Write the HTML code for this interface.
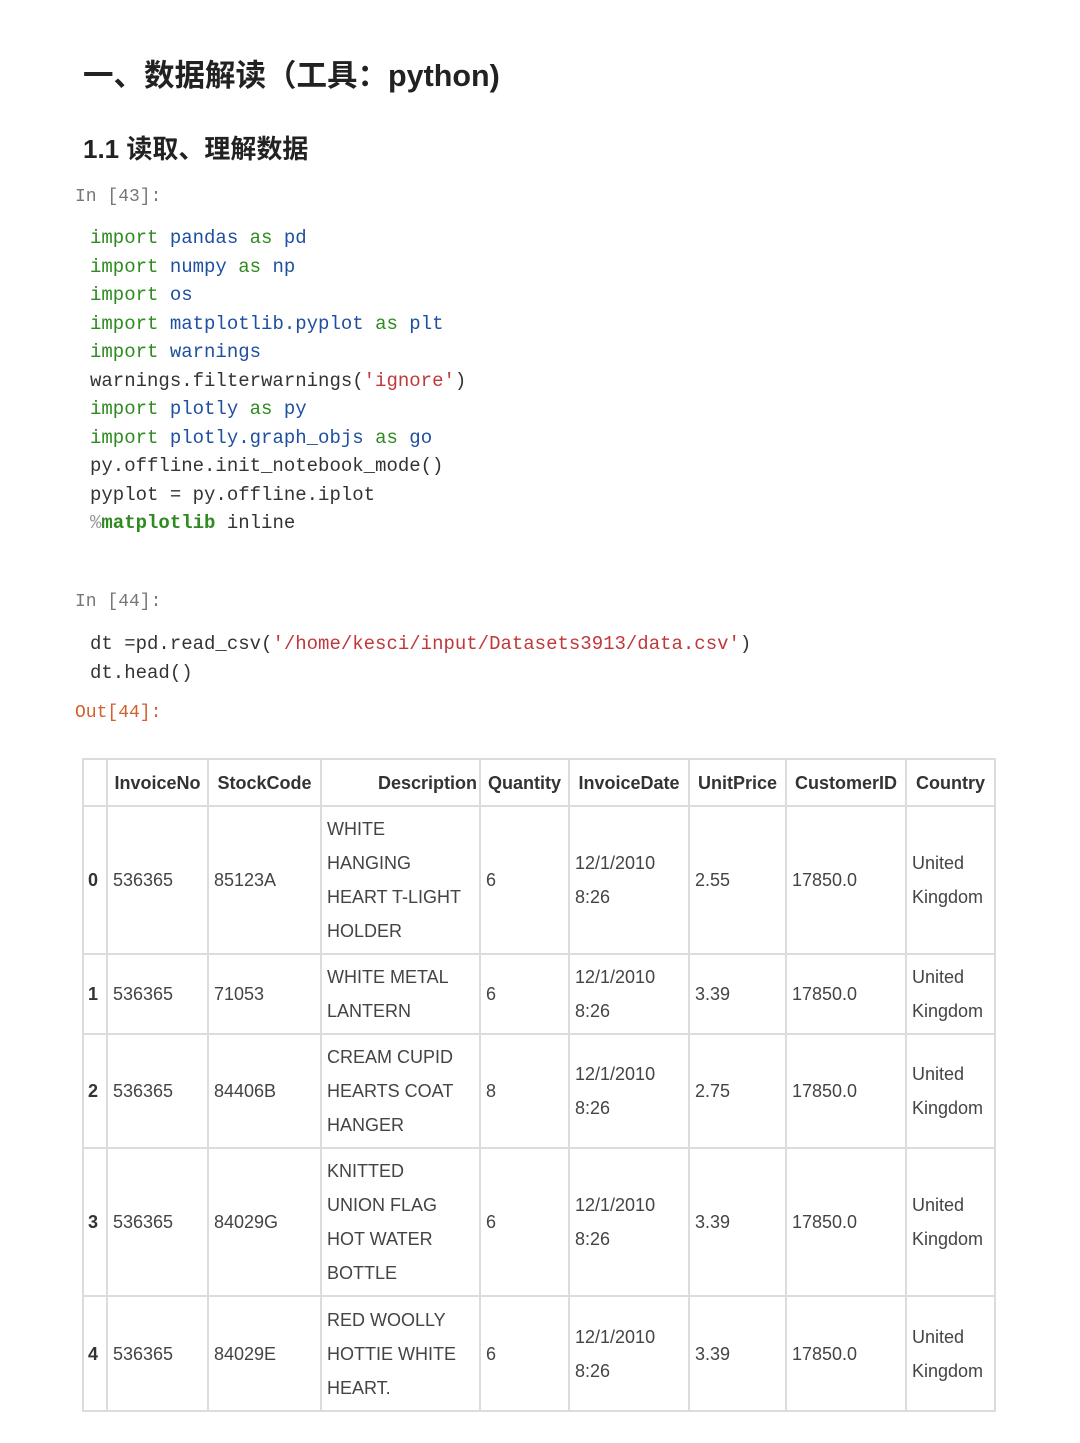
<!DOCTYPE html>
<html><head><meta charset="utf-8"><style>
body{margin:0;width:1080px;height:1443px;background:#fff;position:relative;overflow:hidden;font-family:"Liberation Sans","Noto Sans CJK SC",sans-serif;}
.a{position:absolute;white-space:pre;}
h1{position:absolute;left:83px;top:51px;margin:0;font-size:30.5px;font-weight:bold;color:#222;font-family:"Liberation Sans","Noto Sans CJK SC",sans-serif;}
h2{position:absolute;left:83px;top:129px;margin:0;font-size:26px;font-weight:bold;color:#222;}
.p{font-family:"Liberation Mono",monospace;font-size:18px;color:#777;}
.code{position:absolute;left:90px;font-family:"Liberation Mono",monospace;font-size:19px;line-height:28.5px;color:#333;white-space:pre;}
.k{color:#2e8b1f}.n{color:#1f4fa0}.s{color:#c0383b}
table{position:absolute;left:82px;top:758px;width:914px;border-collapse:collapse;table-layout:fixed;font-size:18px;color:#444;}
td,th{border:2px solid #dcdcdc;padding:0 5px;vertical-align:middle;line-height:34px;text-align:left;overflow:hidden;white-space:nowrap;}
th{color:#333;font-weight:bold;text-align:center;padding:0 2px;}
th.r{text-align:right;}
td.i{font-weight:bold;color:#333;padding:0 4px;}
</style></head><body>
<h1>一、数据解读（工具：python)</h1>
<h2>1.1 读取、理解数据</h2>
<div class="a p" style="left:75px;top:187px">In [43]:</div>
<div class="code" style="top:224px"><span class="k">import</span> <span class="n">pandas</span> <span class="k">as</span> <span class="n">pd</span>
<span class="k">import</span> <span class="n">numpy</span> <span class="k">as</span> <span class="n">np</span>
<span class="k">import</span> <span class="n">os</span>
<span class="k">import</span> <span class="n">matplotlib.pyplot</span> <span class="k">as</span> <span class="n">plt</span>
<span class="k">import</span> <span class="n">warnings</span>
warnings.filterwarnings(<span class="s">'ignore'</span>)
<span class="k">import</span> <span class="n">plotly</span> <span class="k">as</span> <span class="n">py</span>
<span class="k">import</span> <span class="n">plotly.graph_objs</span> <span class="k">as</span> <span class="n">go</span>
py.offline.init_notebook_mode()
pyplot = py.offline.iplot
<span style="color:#999">%</span><span class="k" style="font-weight:bold">matplotlib</span> inline</div>
<div class="a p" style="left:75px;top:592px">In [44]:</div>
<div class="code" style="top:630px">dt =pd.read_csv(<span class="s">'/home/kesci/input/Datasets3913/data.csv'</span>)
dt.head()</div>
<div class="a p" style="left:75px;top:703px;color:#d2602b">Out[44]:</div>
<table>
<colgroup><col style="width:24px"><col style="width:101px"><col style="width:113px"><col style="width:159px"><col style="width:89px"><col style="width:120px"><col style="width:97px"><col style="width:120px"><col style="width:89px"></colgroup>
<tr style="height:47px"><th></th><th>InvoiceNo</th><th>StockCode</th><th class="r">Description</th><th>Quantity</th><th>InvoiceDate</th><th>UnitPrice</th><th>CustomerID</th><th>Country</th></tr>
<tr style="height:148px"><td class="i">0</td><td>536365</td><td>85123A</td><td>WHITE<br>HANGING<br>HEART T-LIGHT<br>HOLDER</td><td>6</td><td>12/1/2010<br>8:26</td><td>2.55</td><td>17850.0</td><td>United<br>Kingdom</td></tr>
<tr style="height:80px"><td class="i">1</td><td>536365</td><td>71053</td><td>WHITE METAL<br>LANTERN</td><td>6</td><td>12/1/2010<br>8:26</td><td>3.39</td><td>17850.0</td><td>United<br>Kingdom</td></tr>
<tr style="height:114px"><td class="i">2</td><td>536365</td><td>84406B</td><td>CREAM CUPID<br>HEARTS COAT<br>HANGER</td><td>8</td><td>12/1/2010<br>8:26</td><td>2.75</td><td>17850.0</td><td>United<br>Kingdom</td></tr>
<tr style="height:148px"><td class="i">3</td><td>536365</td><td>84029G</td><td>KNITTED<br>UNION FLAG<br>HOT WATER<br>BOTTLE</td><td>6</td><td>12/1/2010<br>8:26</td><td>3.39</td><td>17850.0</td><td>United<br>Kingdom</td></tr>
<tr style="height:115px"><td class="i">4</td><td>536365</td><td>84029E</td><td>RED WOOLLY<br>HOTTIE WHITE<br>HEART.</td><td>6</td><td>12/1/2010<br>8:26</td><td>3.39</td><td>17850.0</td><td>United<br>Kingdom</td></tr>
</table>
</body></html>
